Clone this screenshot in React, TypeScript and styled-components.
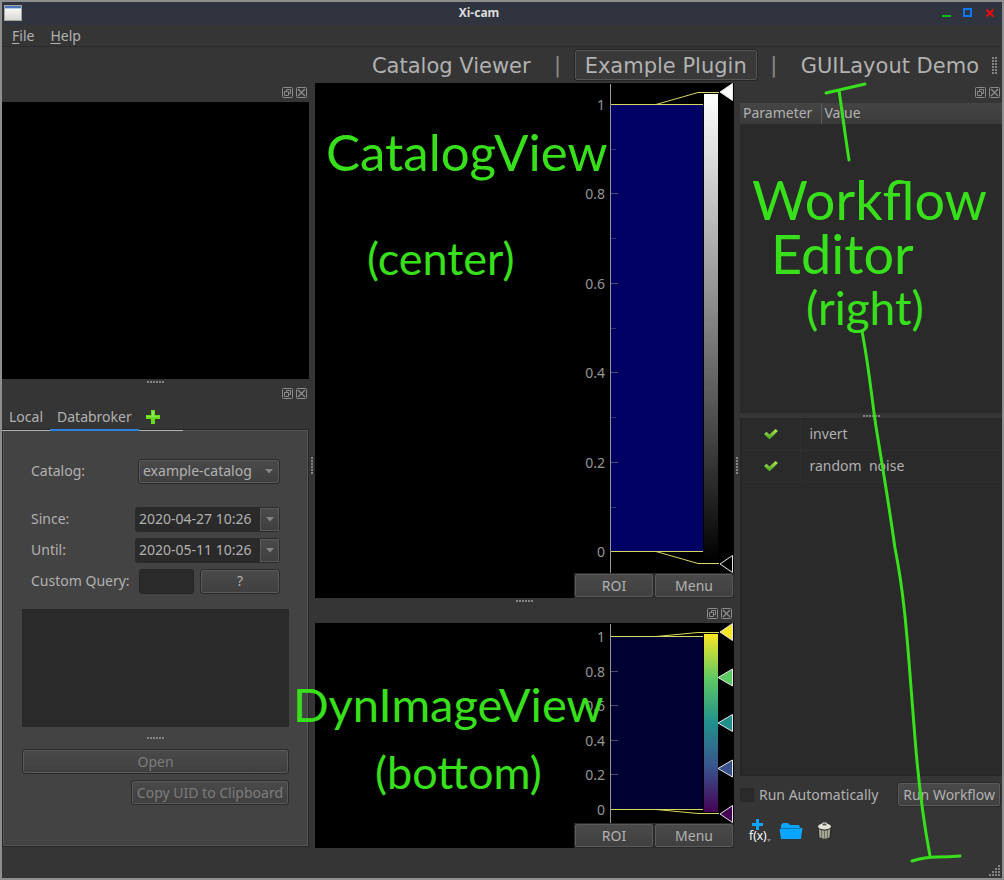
import React from "react";
import styled, { createGlobalStyle, css } from "styled-components";

const ui = `"Noto Sans", "Open Sans", sans-serif`;
const pen = "#38e01c";

const GlobalStyle = createGlobalStyle`
  *, *::before, *::after { box-sizing: border-box; }
  body { margin: 0; background: #353535; }
  button, input, select, textarea { font: inherit; color: inherit; margin: 0; }
`;

const Window = styled.div`
  display: flex;
  flex-direction: column;
  min-height: 100vh;
  border: 2px solid #8e8e8e;
  background: #353535;
  color: #b1b1b1;
  font: 14px/20px ${ui};
`;

const TitleBar = styled.header`
  display: grid;
  grid-template-columns: 60px 1fr 60px;
  align-items: center;
  height: 23px;
  padding: 0 5px 2px 2px;
  background: #2f343f;
`;

const Title = styled.h1`
  margin: 0;
  padding-right: 43px;
  text-align: center;
  color: #dcdcdc;
  font: bold 12px/20px ${ui};
`;

const WindowControls = styled.div`
  display: flex;
  justify-content: flex-end;
  gap: 7px;
`;

const PlainButton = styled.button`
  display: flex;
  align-items: center;
  justify-content: center;
  padding: 0;
  border: 0;
  background: none;
`;

const MenuBar = styled.nav`
  display: flex;
  gap: 16px;
  height: 22px;
  padding: 0 10px;
  border-bottom: 1px solid #2c2c2c;
  u { text-underline-offset: 2px; }
`;

const ToolBar = styled.div`
  display: flex;
  align-items: center;
  justify-content: flex-end;
  height: 36px;
  padding-right: 5px;
  font: 21px/26px "DejaVu Sans", sans-serif;
  svg { margin-left: 3px; }
`;

const PluginTab = styled.button<{ $active?: boolean }>`
  height: 30px;
  padding: 2px 9px 0;
  border: 1px solid ${(p) => (p.$active ? "#555" : "transparent")};
  border-radius: 2px;
  outline: 1px solid ${(p) => (p.$active ? "#252525" : "transparent")};
  outline-offset: 0;
  background: ${(p) => (p.$active ? "#393939" : "none")};
  white-space: nowrap;
`;

const ToolSeparator = styled.span`
  width: 34px;
  text-align: center;
  color: #8c8c8c;
`;

const Workspace = styled.main`
  flex: 1;
  display: grid;
  grid-template-columns: 307fr 6px 419fr 6px 262fr;
`;

const Column = styled.section`
  position: relative;
  display: flex;
  flex-direction: column;
  min-width: 0;
`;

const Splitter = styled.div<{ $vertical?: boolean }>`
  display: flex;
  align-items: center;
  justify-content: center;
  ${(p) => (p.$vertical ? css`width: 6px;` : css`height: 6px;`)}
`;

const NarrowSplitter = styled(Splitter)`
  height: 5px;
`;

const DockBar = styled.div`
  display: flex;
  align-items: center;
  justify-content: flex-end;
  gap: 3px;
  height: 19px;
  padding-right: 2px;
`;

const Preview = styled.div`
  flex: 1;
  min-height: 277px;
  background: #000;
`;

const TabStrip = styled.div`
  position: relative;
  z-index: 1;
  display: flex;
  height: 28px;
  margin-bottom: -1px;
`;

const Tab = styled.button<{ $active?: boolean }>`
  display: flex;
  align-items: center;
  min-width: 44px;
  padding: 0 7px 1px;
  border: 0;
  box-shadow: ${(p) => (p.$active ? "inset 0 -2px #2a82da" : "inset 0 -1px #b1b1b1")};
  background: none;
`;

const BrowserFrame = styled.div`
  display: flex;
  flex-direction: column;
  height: 416px;
  margin: 0 1px 2px 1px;
  padding: 28px 18px 0;
  border: 1px solid #555;
  outline: 1px solid #262626;
  outline-offset: 0;
  background: #434343;
`;

const Form = styled.form`
  display: flex;
  flex-direction: column;
  gap: 7px;
  padding: 0 9px;
`;

const FormRow = styled.div<{ $spaced?: boolean }>`
  display: flex;
  align-items: center;
  justify-content: space-between;
  height: 24px;
  margin-bottom: ${(p) => (p.$spaced ? 17 : 0)}px;
  white-space: nowrap;
`;

const raised = css`
  border: 1px solid #2a2a2a;
  border-radius: 3px;
  box-shadow: inset 0 0 0 1px #5a5a5a;
  background: linear-gradient(#4a4a4a, #3f3f3f);
`;

const Button = styled.button`
  ${raised}
  height: 25px;
  padding: 0 5px;
  line-height: 20px;
  white-space: nowrap;
  &:disabled { color: #7c7c7c; }
`;

const HelpButton = styled(Button)`
  width: 80px;
`;

const CopyButton = styled(Button)`
  align-self: flex-end;
  margin-top: 6px;
`;

const SelectBox = styled.div`
  position: relative;
  width: 142px;
  svg { position: absolute; right: 7px; top: 10px; pointer-events: none; }
`;

const Select = styled.select`
  ${raised}
  appearance: none;
  width: 100%;
  height: 25px;
  padding: 0 4px;
`;

const DateBox = styled.div`
  display: flex;
  width: 145px;
  height: 25px;
  border: 1px solid #2a2a2a;
  border-radius: 3px;
  background: #2a2a2a;
`;

const DateInput = styled.input`
  flex: 1;
  min-width: 0;
  padding: 0 0 0 3px;
  border: 0;
  background: none;
`;

const DateDrop = styled(PlainButton)`
  width: 19px;
  border: 1px solid #5a5a5a;
  background: linear-gradient(#4a4a4a, #3f3f3f);
`;

const QueryInput = styled.input`
  width: 55px;
  height: 25px;
  margin-left: auto;
  margin-right: 6px;
  border: 1px solid #242424;
  border-radius: 3px;
  background: #2a2a2a;
`;

const Results = styled.textarea`
  display: block;
  height: 118px;
  margin-top: 16px;
  border: 0;
  border-top: 1px solid #252525;
  background: #2a2a2a;
  resize: none;
`;

const ResultsSplitter = styled(Splitter)`
  height: 22px;
`;

const ImageView = styled.div`
  display: flex;
  background: #000;
  &:last-of-type { flex: 1; }
`;

const ImageCanvas = styled.div`
  flex: 1;
`;

const Histogram = styled.div`
  display: flex;
  flex-direction: column;
  width: 160px;
  svg { display: block; }
`;

const HistogramButtons = styled.div`
  display: grid;
  grid-template-columns: 1fr 1fr;
  height: 25px;
  background: #2d2d2d;
`;

const ParameterPane = styled.div`
  flex: 310;
  margin-top: 1px;
  background: #2a2a2a;
`;

const ParameterTable = styled.table`
  width: 100%;
  border-collapse: collapse;
  th {
    height: 20px;
    padding: 0 3px 1px;
    background: linear-gradient(#454545, #3a3a3a);
    font-weight: normal;
    line-height: 20px;
    text-align: left;
  }
  th:first-child { width: 81px; border-right: 1px solid #5a5a5a; }
`;

const OperationPane = styled.div`
  flex: 356;
  border: 1px solid #262626;
  border-left-width: 2px;
  background: #2a2a2a;
`;

const OperationTable = styled.table`
  width: 100%;
  border-collapse: collapse;
  td {
    height: 31px;
    padding: 0 9px;
    border-bottom: 1px solid #2f2f2f;
    white-space: pre;
  }
  td:first-child { width: 58px; border-right: 1px solid #2f2f2f; padding: 0 0 0 22px; }
  svg { display: block; }
`;

const RunRow = styled.div`
  display: flex;
  align-items: center;
  height: 37px;
  padding-right: 1px;
`;

const RunLabel = styled.label`
  display: flex;
  align-items: center;
  flex: 1;
  gap: 5px;
`;

const CheckBox = styled.input`
  appearance: none;
  width: 14px;
  height: 14px;
  border: 1px solid #272727;
  background: #2a2a2a;
`;

const OperationTools = styled.div`
  display: flex;
  align-items: center;
  gap: 8px;
  height: 35px;
  padding: 1px 0 0 8px;
`;

const StatusBar = styled.footer`
  display: flex;
  align-items: flex-end;
  justify-content: flex-end;
  height: 30px;
  padding: 1px;
`;

const Markup = styled.svg`
  position: absolute;
  z-index: 2;
  left: 0;
  top: 0;
  width: 100%;
  height: 100%;
  overflow: visible;
  pointer-events: none;
  font-family: Lato, sans-serif;
  fill: ${pen};
  path { fill: none; stroke: ${pen}; stroke-width: 3; stroke-linecap: round; stroke-linejoin: round; }
`;

function Grip({ cols, rows }: { cols: number; rows: number }) {
  const dots = [];
  for (let c = 0; c < cols; c++)
    for (let r = 0; r < rows; r++)
      dots.push(<rect key={`${c}-${r}`} x={c * 3} y={r * 3} width="2" height="2" />);
  return (
    <svg width={cols * 3 - 1} height={rows * 3 - 1} fill="#858585" aria-hidden="true">
      {dots}
    </svg>
  );
}

function DockControls() {
  return (
    <DockBar>
      <PlainButton aria-label="Float panel">
        <svg width="11" height="11" fill="none" stroke="#8a8a8a">
          <rect x="0.5" y="0.5" width="10" height="10" rx="1" />
          <path d="M4.5 4.5V2.5H8.5V6.5H6.5M2.5 4.5H6.5V8.5H2.5Z" />
        </svg>
      </PlainButton>
      <PlainButton aria-label="Close panel">
        <svg width="11" height="11" fill="none" stroke="#8a8a8a">
          <rect x="0.5" y="0.5" width="10" height="10" rx="1" />
          <path d="M2 2L9 9M9 2L2 9" strokeWidth="1.4" />
        </svg>
      </PlainButton>
    </DockBar>
  );
}

function Arrow() {
  return (
    <svg width="8" height="5" aria-hidden="true">
      <path d="M0 0H8L4 4.5Z" fill="#858585" />
    </svg>
  );
}

type Stop = { at: number; color: string };
type PlotProps = {
  id: string;
  height: number;
  top: number;
  bottom: number;
  fill: string;
  minor?: boolean;
  stops: Stop[];
};

function HistogramPlot({ id, height, top, bottom, fill, minor, stops }: PlotProps) {
  const barTop = top - (minor ? 12 : 4);
  const barBottom = bottom + (minor ? 12 : 4);
  const labels = ["1", "0.8", "0.6", "0.4", "0.2", "0"];
  const yAt = (i: number) => Math.round(top + ((bottom - 1 - top) * i) / 5);
  return (
    <svg width="160" height={height} role="img" aria-label="Intensity histogram">
      <defs>
        <linearGradient id={id} x1="0" y1="0" x2="0" y2="1">
          {stops.map((s) => (
            <stop key={s.at} offset={s.at} stopColor={s.color} />
          ))}
        </linearGradient>
      </defs>
      <rect x="37" y={top} width="93" height={bottom - top} fill={fill} />
      <rect x="36" y="1" width="1" height={height - 1} fill="#969696" />
      {labels.map((label, i) => (
        <g key={label}>
          <rect x="37" y={yAt(i)} width="7" height="1" fill="#969696" opacity="0.5" />
          {minor && i < 5 && (
            <rect x="37" y={Math.round((yAt(i) + yAt(i + 1)) / 2)} width="5" height="1" fill="#969696" opacity="0.35" />
          )}
          <text x="31" y={yAt(i) + 6} textAnchor="end" fontSize="14" fill="#969696">
            {label}
          </text>
        </g>
      ))}
      <g fill="none" stroke="#d6d65c">
        <path d={`M37 ${top + 0.5}H129M82 ${top + 0.5}L124 ${barTop + 0.5}H145`} />
        <path d={`M37 ${bottom - 0.5}H129M82 ${bottom - 0.5}L124 ${barBottom - 0.5}H145`} />
      </g>
      <rect x="129" y={barTop + 1} width="16" height={barBottom - barTop - 2} fill="#000" />
      <rect x="130" y={barTop + 2} width="14" height={barBottom - barTop - 4} fill={`url(#${id})`} />
      {stops.map((s) => {
        const y = barTop + (barBottom - barTop) * s.at;
        const tip = s.at === 0 || s.at === 1 ? 146 : 144;
        return (
          <path
            key={s.at}
            d={`M${tip} ${y}L158.5 ${y - 8.5}V${y + 8.5}Z`}
            fill={s.color}
            stroke="#e6e6e6"
          />
        );
      })}
    </svg>
  );
}

function HistogramPanel(props: PlotProps) {
  return (
    <Histogram>
      <HistogramPlot {...props} />
      <HistogramButtons>
        <Button>ROI</Button>
        <Button>Menu</Button>
      </HistogramButtons>
    </Histogram>
  );
}

const gray: Stop[] = [
  { at: 0, color: "#ffffff" },
  { at: 1, color: "#000000" },
];
const viridis: Stop[] = [
  { at: 0, color: "#fde725" },
  { at: 0.25, color: "#5dc963" },
  { at: 0.5, color: "#21908d" },
  { at: 0.75, color: "#3a528b" },
  { at: 1, color: "#440154" },
];

function Check() {
  return (
    <svg width="14" height="12" viewBox="0 0 14 12" aria-label="enabled">
      <defs>
        <linearGradient id="check" x1="0" y1="0" x2="0" y2="1">
          <stop offset="0" stopColor="#b5ec5a" />
          <stop offset="1" stopColor="#3fa01c" />
        </linearGradient>
      </defs>
      <path d="M0 6L2.5 3.800L5.5 6.500L11.5 1L14 3.100L6 11H5Z" fill="url(#check)" />
    </svg>
  );
}

export default function App() {
  return (
    <>
      <GlobalStyle />
      <Window>
        <TitleBar>
          <svg width="18" height="16" aria-hidden="true">
            <defs>
              <linearGradient id="app" x1="0" y1="0" x2="0" y2="1">
                <stop offset="0" stopColor="#fff" />
                <stop offset="1" stopColor="#d6d8d2" />
              </linearGradient>
            </defs>
            <rect x="0.5" y="0.5" width="17" height="15" fill="url(#app)" stroke="#a3a59f" />
            <rect x="1" y="1" width="16" height="2" fill="#4a76b8" />
            <rect x="1" y="3" width="16" height="1" fill="#b8cae6" />
          </svg>
          <Title>Xi-cam</Title>
          <WindowControls>
            <PlainButton aria-label="Minimize">
              <svg width="16" height="14"><rect x="3" y="9" width="9" height="2" fill="#0ac20a" /></svg>
            </PlainButton>
            <PlainButton aria-label="Maximize">
              <svg width="14" height="14"><rect x="2" y="3" width="7" height="7" fill="none" stroke="#0a78ff" strokeWidth="2" /></svg>
            </PlainButton>
            <PlainButton aria-label="Close">
              <svg width="14" height="14"><path d="M3.5 3.5L10.5 10.5M10.5 3.5L3.5 10.5" stroke="#f00808" strokeWidth="2" /></svg>
            </PlainButton>
          </WindowControls>
        </TitleBar>

        <MenuBar>
          <PlainButton><span><u>F</u>ile</span></PlainButton>
          <PlainButton><span><u>H</u>elp</span></PlainButton>
        </MenuBar>

        <ToolBar>
          <PluginTab>Catalog Viewer</PluginTab>
          <ToolSeparator>|</ToolSeparator>
          <PluginTab $active>Example Plugin</PluginTab>
          <ToolSeparator>|</ToolSeparator>
          <PluginTab>GUILayout Demo</PluginTab>
          <Grip cols={2} rows={6} />
        </ToolBar>

        <Workspace>
          <Column>
            <DockControls />
            <Preview />
            <NarrowSplitter><Grip cols={6} rows={1} /></NarrowSplitter>
            <DockControls />
            <TabStrip>
              <Tab>Local</Tab>
              <Tab $active>Databroker</Tab>
              <Tab aria-label="Add catalog browser">
                <svg width="14" height="14"><path d="M5 0H9V5H14V9H9V14H5V9H0V5H5Z" fill="#66dc14" /><path d="M6 1H8V6H13V7H1V6H6Z" fill="#8ce65a" /></svg>
              </Tab>
            </TabStrip>
            <BrowserFrame>
              <Form onSubmit={(e) => e.preventDefault()}>
                <FormRow $spaced>
                  <label htmlFor="catalog">Catalog:</label>
                  <SelectBox>
                    <Select id="catalog"><option>example-catalog</option></Select>
                    <Arrow />
                  </SelectBox>
                </FormRow>
                <FormRow>
                  <label htmlFor="since">Since:</label>
                  <DateBox>
                    <DateInput id="since" defaultValue="2020-04-27 10:26" />
                    <DateDrop aria-label="Pick start date"><Arrow /></DateDrop>
                  </DateBox>
                </FormRow>
                <FormRow>
                  <label htmlFor="until">Until:</label>
                  <DateBox>
                    <DateInput id="until" defaultValue="2020-05-11 10:26" />
                    <DateDrop aria-label="Pick end date"><Arrow /></DateDrop>
                  </DateBox>
                </FormRow>
                <FormRow>
                  <label htmlFor="query">Custom Query:</label>
                  <QueryInput id="query" />
                  <HelpButton>?</HelpButton>
                </FormRow>
              </Form>
              <Results aria-label="Catalog entries" readOnly />
              <ResultsSplitter><Grip cols={6} rows={1} /></ResultsSplitter>
              <Button disabled>Open</Button>
              <CopyButton disabled>Copy UID to Clipboard</CopyButton>
            </BrowserFrame>
          </Column>

          <Splitter $vertical><Grip cols={1} rows={6} /></Splitter>

          <Column>
            <ImageView>
              <ImageCanvas />
              <HistogramPanel id="gray" height={490} top={21} bottom={469} fill="#000064" minor stops={gray} />
            </ImageView>
            <Splitter><Grip cols={6} rows={1} /></Splitter>
            <DockControls />
            <ImageView>
              <ImageCanvas />
              <HistogramPanel id="viridis" height={200} top={13} bottom={187} fill="#000032" stops={viridis} />
            </ImageView>
            <Markup>
              <text x="11" y="88" fontSize="51">CatalogView</text>
              <text x="52" y="192" fontSize="45">(center)</text>
              <text x="-22" y="639" fontSize="47">DynImageView</text>
              <text x="60" y="706" fontSize="45">(bottom)</text>
            </Markup>
          </Column>

          <Splitter $vertical><Grip cols={1} rows={6} /></Splitter>

          <Column>
            <DockControls />
            <ParameterPane>
              <ParameterTable>
                <thead><tr><th>Parameter</th><th>Value</th></tr></thead>
              </ParameterTable>
            </ParameterPane>
            <NarrowSplitter><Grip cols={6} rows={1} /></NarrowSplitter>
            <OperationPane>
              <OperationTable>
                <tbody>
                  <tr><td><Check /></td><td>invert</td></tr>
                  <tr><td><Check /></td><td>{"random  noise"}</td></tr>
                </tbody>
              </OperationTable>
            </OperationPane>
            <RunRow>
              <RunLabel><CheckBox type="checkbox" />Run Automatically</RunLabel>
              <Button>Run Workflow</Button>
            </RunRow>
            <OperationTools>
              <PlainButton aria-label="Add operation">
                <svg width="23" height="26">
                  <path d="M8 1H11V5H15V8H11V12H8V8H4V5H8Z" fill="#0aa5ff" />
                  <text x="1" y="22" fontSize="12" fill="#fff">f(x)</text>
                  <path d="M19 21H23L21 24Z" fill="#858585" />
                </svg>
              </PlainButton>
              <PlainButton aria-label="Open workflow">
                <svg width="24" height="18">
                  <path d="M2 3L4 1H9L11 3H20L21 6H23.5L22 17H2L0.5 7H2Z" fill="#0aa5ff" />
                  <path d="M2 6.5H21" stroke="#0878bb" />
                </svg>
              </PlainButton>
              <PlainButton aria-label="Delete operation">
                <svg width="26" height="20">
                  <path d="M7 6H20L19 17Q13.500 20 8 17Z" fill="#a5a596" stroke="#20201c" />
                  <path d="M10.500 8V17M13.500 8V18M16.500 8V17" stroke="#6e6e62" />
                  <ellipse cx="13.500" cy="5.500" rx="7" ry="3.500" fill="#e2e2d6" stroke="#20201c" />
                  <rect x="11" y="2" width="5" height="3" rx="1" fill="#55554a" stroke="#f0f0e6" />
                </svg>
              </PlainButton>
            </OperationTools>
            <Markup>
              <text x="12" y="137" fontSize="54">Workflow</text>
              <text x="31" y="191" fontSize="54">Editor</text>
              <text x="66" y="242" fontSize="46">(right)</text>
              <path d="M86 10L125 1M99 7L105 50Q107 64 109 77" />
              <path d="M122 248C130 290 132 320 137 350S150 430 155 465C166 520 168 570 175 655Q180 720 190 773M172 778Q185 774 197 774T220 773" />
            </Markup>
          </Column>
        </Workspace>

        <StatusBar>
          <svg width="12" height="12" fill="#858585" aria-hidden="true">
            <path d="M9 0h2v2h-2zM6 3h2v2h-2zM9 3h2v2h-2zM3 6h2v2h-2zM6 6h2v2h-2zM9 6h2v2h-2zM0 9h2v2h-2zM3 9h2v2h-2zM6 9h2v2h-2zM9 9h2v2h-2z" />
          </svg>
        </StatusBar>
      </Window>
    </>
  );
}
